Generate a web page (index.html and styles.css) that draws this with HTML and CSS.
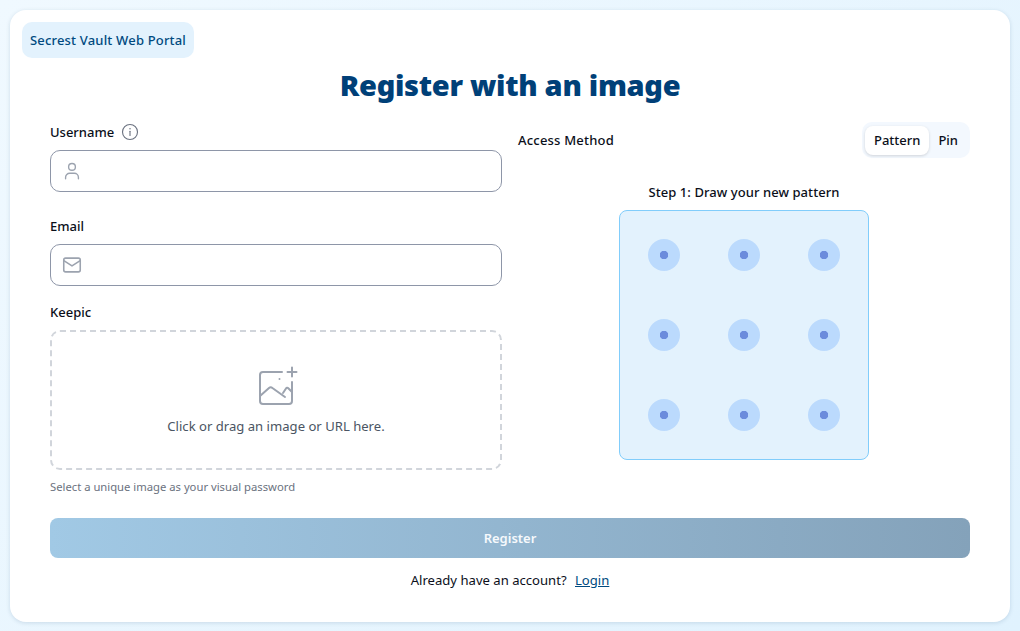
FILE: index.html
```html
<!DOCTYPE html>
<html lang="en">
<head>
    <meta charset="UTF-8">
    <meta name="viewport" content="width=device-width, initial-scale=1.0">
    <title>Register with an image</title>
    <link rel="stylesheet" href="styles.css">
</head>
<body>
    <div class="card">
        <div class="brand">Secrest Vault Web Portal</div>
        <div class="content">
            <h1>Register with an image</h1>
            <div class="columns">
                <div class="left">
                    <div class="label-row username-label">
                        <label>Username</label>
                        <svg class="info" viewBox="0 0 24 24" width="18" height="18" fill="none" stroke="#6b7280" stroke-width="1.5" stroke-linecap="round"><circle cx="12" cy="12" r="10"/><path d="M12 11v5.500"/><path d="M12 7.600v.1" stroke-width="2"/></svg>
                    </div>
                    <div class="field">
                        <svg viewBox="0 0 24 24" width="22" height="22" fill="none" stroke="#9ca3af" stroke-width="1.5" stroke-linecap="round"><circle cx="12" cy="7.500" r="3.700"/><path d="M5 20.500v-1.500a4.500 4.500 0 0 1 4.500-4.500h5a4.500 4.500 0 0 1 4.500 4.500v1.500"/></svg>
                    </div>
                    <div class="label-row email-label"><label>Email</label></div>
                    <div class="field">
                        <svg viewBox="0 0 24 24" width="22" height="22" fill="none" stroke="#9ca3af" stroke-width="1.700" stroke-linejoin="round" stroke-linecap="round"><rect x="3" y="4.500" width="18" height="15" rx="2"/><path d="M3.500 7.500l8.500 5.500 8.500-5.500"/></svg>
                    </div>
                    <div class="label-row keepic-label"><label>Keepic</label></div>
                    <div class="dropzone">
                        <svg viewBox="-4 0 44 40" width="44" height="40" fill="none" stroke="#9ca3af" stroke-width="2" stroke-linecap="round" stroke-linejoin="round"><path d="M24 6H5a3 3 0 0 0-3 3v26a3 3 0 0 0 3 3h26a3 3 0 0 0 3-3V16"/><path d="M2 30l9-8a2.500 2.500 0 0 1 3.400 0L27 31"/><path d="M25 27l3-4.500a1.500 1.500 0 0 1 2.300-.2L34 26"/><path d="M34 1.500v9M29.500 6h9"/><path d="M21.500 13v.1"/></svg>
                        <p>Click or drag an image or URL here.</p>
                    </div>
                    <p class="hint">Select a unique image as your visual password</p>
                </div>
                <div class="right">
                    <div class="method">
                        <span class="method-label">Access Method</span>
                        <div class="toggle">
                            <div class="tab active">Pattern</div>
                            <div class="tab">Pin</div>
                        </div>
                    </div>
                    <h3>Step 1: Draw your new pattern</h3>
                    <div class="pattern">
                        <div class="dot"></div>
                        <div class="dot"></div>
                        <div class="dot"></div>
                        <div class="dot"></div>
                        <div class="dot"></div>
                        <div class="dot"></div>
                        <div class="dot"></div>
                        <div class="dot"></div>
                        <div class="dot"></div>
                    </div>
                </div>
            </div>
            <button disabled>Register</button>
            <p class="login">Already have an account? <a href="#">Login</a></p>
        </div>
    </div>
</body>
</html>
```

FILE: styles.css
```css
html, body {
    height: 100%;
}
body {
    font-family: "Noto Sans", "Open Sans", sans-serif;
    background: linear-gradient(135deg, #f0f9ff, #e0f2fe);
    color: #0b0f1a;
    margin: 0;
    padding: 10px;
    box-sizing: border-box;
    overflow: hidden;
}
.card {
    background: white;
    border-radius: 16px;
    box-shadow: 0 1px 4px rgba(15, 60, 100, 0.15);
    width: 1000px;
    height: 612px;
    padding: 12px;
    box-sizing: border-box;
}
.brand {
    display: inline-block;
    height: 36px;
    line-height: 36px;
    padding: 0 8px;
    background-color: #e3f2fd;
    border-radius: 10px;
    color: #004a80;
    font-size: 13px;
    font-weight: 500;
    letter-spacing: 0.18px;
}
.content {
    padding: 0 28px;
}
h1 {
    margin: 4px 0 0;
    height: 45px;
    line-height: 45px;
    text-align: center;
    font-size: 29px;
    font-weight: 900;
    letter-spacing: -0.3px;
    color: #004078;
}
.columns {
    display: flex;
    gap: 16px;
    margin-top: 13px;
}
.left, .right {
    width: 452px;
}
.label-row {
    display: flex;
    align-items: center;
    gap: 7px;
    height: 20px;
    font-size: 13px;
    font-weight: 500;
}
.username-label {
    margin: 2px 0 8px;
}
.email-label {
    margin: 24px 0 8px;
}
.keepic-label {
    margin: 16px 0 8px;
}
.field {
    height: 42px;
    box-sizing: border-box;
    border: 1px solid #8e96a8;
    border-radius: 10px;
    display: flex;
    align-items: center;
    padding-left: 10px;
}
.dropzone {
    height: 140px;
    box-sizing: border-box;
    border: 2px dashed #d1d5db;
    border-radius: 10px;
    display: flex;
    flex-direction: column;
    align-items: center;
    padding-top: 34px;
}
.dropzone p {
    margin: 10px 0 0;
    font-size: 13.1px;
    line-height: 20px;
    color: #4b5563;
}
.hint {
    margin: 9px 0 0;
    font-size: 11.25px;
    line-height: 16px;
    color: #6b7280;
}
.method {
    display: flex;
    justify-content: space-between;
    align-items: center;
    margin-top: 2px;
    font-size: 13px;
    font-weight: 500;
}
.method-label {
    letter-spacing: 0.2px;
}
.toggle {
    display: flex;
    align-items: center;
    height: 36px;
    padding: 0 3px;
    box-sizing: border-box;
    background-color: #f3f8fe;
    border-radius: 10px;
}
.tab {
    height: 29px;
    line-height: 29px;
    padding: 0 9px;
    border-radius: 8px;
}
.tab.active {
    background: white;
    box-shadow: 0 1px 3px rgba(0, 0, 0, 0.15);
}
h3 {
    margin: 24px 0 8px;
    text-align: center;
    font-size: 13px;
    line-height: 20px;
    font-weight: 500;
    letter-spacing: 0.07px;
}
.pattern {
    width: 250px;
    height: 250px;
    box-sizing: border-box;
    margin: 0 auto;
    background-color: #e3f2fd;
    border: 1px solid #81cdfb;
    border-radius: 8px;
    display: grid;
    grid-template-columns: repeat(3, 32px);
    grid-template-rows: repeat(3, 32px);
    justify-content: space-between;
    align-content: space-between;
    padding: 28px;
}
.dot {
    width: 32px;
    height: 32px;
    border-radius: 50%;
    background: radial-gradient(circle, #6c8cdc 0, #6c8cdc 4px, #bbdafd 4.5px);
}
button {
    display: block;
    width: 100%;
    height: 40px;
    margin-top: 23px;
    border: none;
    border-radius: 8px;
    background: linear-gradient(90deg, #a1c9e5, #84a2ba);
    color: #f6f9fc;
    font-family: inherit;
    font-size: 13px;
    font-weight: 600;
}
.login {
    margin: 12px 0 0;
    text-align: center;
    font-size: 13.1px;
    line-height: 20px;
}
.login a {
    color: #004a80;
    margin-left: 5px;
}
```
